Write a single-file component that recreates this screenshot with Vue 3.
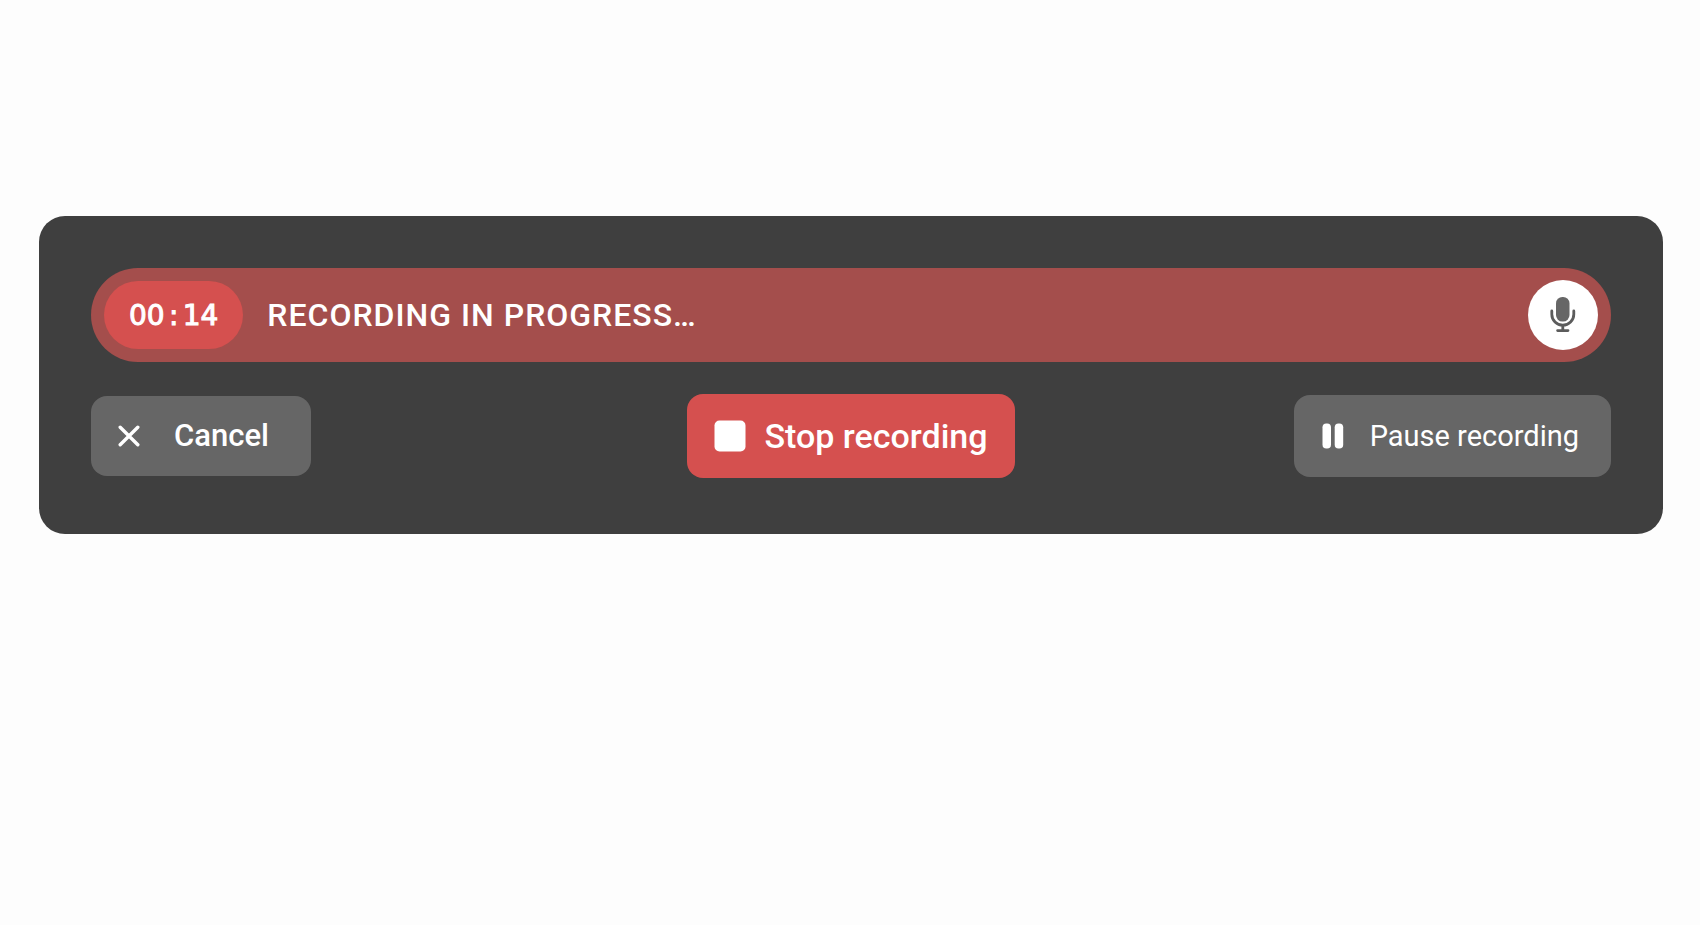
<script setup>
import { ref, computed } from 'vue'

const seconds = ref(14)
const pad = (n) => String(n).padStart(2, '0')
const mm = computed(() => pad(Math.floor(seconds.value / 60)))
const ss = computed(() => pad(seconds.value % 60))
</script>

<template>
  <main class="page">
    <section class="panel" aria-label="Recorder">
      <div class="status">
        <time class="timer">{{ mm }}<span class="colon">:</span>{{ ss }}</time>
        <span class="message">RECORDING IN PROGRESS…</span>
        <button class="mic" type="button" aria-label="Microphone">
          <svg width="28" height="38" viewBox="0 0 28 38" fill="none">
            <rect x="7" y="1" width="13.5" height="24.5" rx="6.4" fill="#666" />
            <path d="M2.8 15v3.2a11 11 0 0 0 22 0V15" stroke="#5c5c5c" stroke-width="2.8" stroke-linecap="round" />
            <path d="M13.8 29.5v5M8.6 34.6h10.4" stroke="#5c5c5c" stroke-width="2.8" stroke-linecap="round" />
          </svg>
        </button>
      </div>
      <div class="actions">
        <button class="btn cancel" type="button">
          <svg width="22" height="22" viewBox="0 0 22 22" fill="none">
            <path d="M2.2 2.2l17.6 17.6M19.8 2.2L2.2 19.8" stroke="#fff" stroke-width="3.4" stroke-linecap="round" />
          </svg>
          <span>Cancel</span>
        </button>
        <button class="btn stop" type="button">
          <svg width="32" height="32" viewBox="0 0 32 32"><rect x="0.5" y="0.5" width="31" height="31" rx="5" fill="#fff" /></svg>
          <span>Stop recording</span>
        </button>
        <button class="btn pause" type="button">
          <svg width="22" height="26" viewBox="0 0 22 26" fill="#fff">
            <rect x="0.5" y="0.5" width="8.5" height="25" rx="3.8" />
            <rect x="12.7" y="0.5" width="8.5" height="25" rx="3.8" />
          </svg>
          <span>Pause recording</span>
        </button>
      </div>
    </section>
  </main>
</template>

<style>
body {
  background: #fdfdfd;
}
</style>

<style scoped>
.page {
  padding: 216px 37px 0 39px;
  font-family: Roboto, "Liberation Sans", sans-serif;
  color: #fff;
}
.panel {
  display: flex;
  flex-direction: column;
  gap: 32px;
  padding: 52px 52px 56px;
  border-radius: 26px;
  background: #3f3f3f;
}
.status {
  display: flex;
  align-items: center;
  padding: 12px 13px;
  border-radius: 48px;
  background: #a44e4c;
}
.timer {
  padding: 2px 25px 0;
  border-radius: 34px;
  background: #d5504f;
  font-family: "DejaVu Sans", sans-serif;
  font-size: 28px;
  line-height: 66px;
  -webkit-text-stroke: 1px #fff;
}
.colon {
  display: inline-block;
  width: 18px;
  text-align: center;
}
.message {
  flex: 1;
  margin-left: 24px;
  font-size: 32px;
  font-weight: 500;
  line-height: 40px;
  letter-spacing: 1px;
}
.mic {
  display: flex;
  align-items: center;
  justify-content: center;
  width: 70px;
  height: 70px;
  padding: 0;
  border: 0;
  border-radius: 50%;
  background: #fff;
}
.actions {
  display: grid;
  grid-template-columns: 1fr auto 1fr;
  align-items: center;
}
.btn {
  display: flex;
  align-items: center;
  border: 0;
  border-radius: 16px;
  background: #666;
  color: #fff;
  font-family: inherit;
  line-height: 40px;
  white-space: nowrap;
}
.cancel {
  justify-self: start;
  gap: 34px;
  padding: 20px 42px 20px 27px;
  font-size: 31px;
  font-weight: 500;
}
.stop {
  gap: 18px;
  padding: 22px 27px;
  background: #d5504f;
  font-size: 34px;
  font-weight: 500;
}
.pause {
  justify-self: end;
  gap: 26px;
  padding: 21px 32px 21px 28px;
  font-size: 29px;
}
</style>
